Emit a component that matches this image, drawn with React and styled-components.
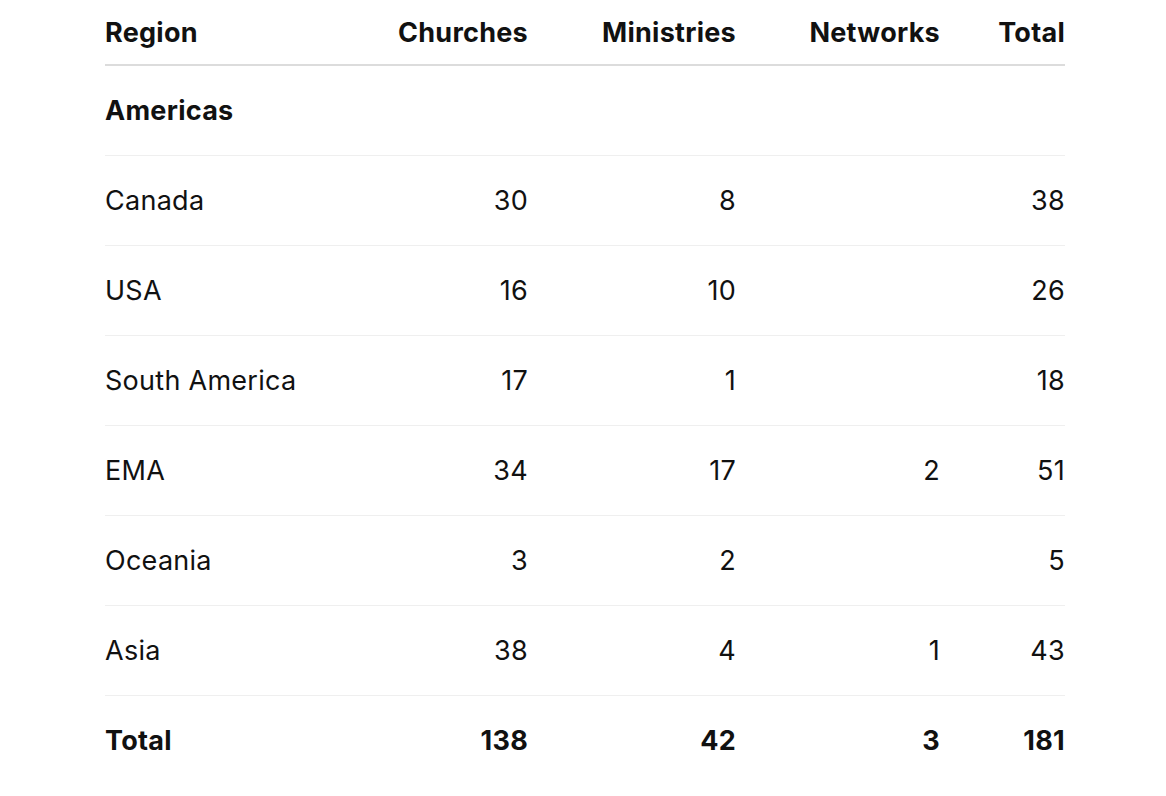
import React from "react";
import styled, { createGlobalStyle } from "styled-components";

const GlobalStyle = createGlobalStyle`
    html, body {
        margin: 0;
        padding: 0;
        background: #fff;
    }
    body {
        font-family: Inter, "Noto Sans", "Liberation Sans", sans-serif;
        color: #111;
    }
`;

const Page = styled.div`
    padding: 0 101px 0 105px;
`;

const Table = styled.table`
    width: 960px;
    border-collapse: collapse;
    table-layout: fixed;
    font-size: 27px;
    letter-spacing: 0.01em;
    white-space: nowrap;
`;

const HeadCell = styled.th`
    height: 64px;
    padding: 0;
    font-weight: 700;
    text-align: ${({ $align }) => $align || "right"};
    border-bottom: 2px solid #dcdcdc;
    vertical-align: middle;
`;

const Row = styled.tr`
    border-bottom: 1px solid #efefef;

    &:last-child {
        border-bottom: none;
    }
`;

const Cell = styled.td`
    height: 89px;
    padding: 0;
    text-align: ${({ $align }) => $align || "right"};
    font-weight: ${({ $bold }) => ($bold ? 700 : 400)};
    vertical-align: middle;
`;

const columns = [
    { label: "Region", width: 230, align: "left" },
    { label: "Churches", width: 193 },
    { label: "Ministries", width: 208 },
    { label: "Networks", width: 204 },
    { label: "Total", width: 125 },
];

const rows = [
    ["Canada", 30, 8, "", 38],
    ["USA", 16, 10, "", 26],
    ["South America", 17, 1, "", 18],
    ["EMA", 34, 17, 2, 51],
    ["Oceania", 3, 2, "", 5],
    ["Asia", 38, 4, 1, 43],
];

const totals = ["Total", 138, 42, 3, 181];

const App = () => (
    <>
        <GlobalStyle />
        <Page>
            <Table>
                <colgroup>
                    {columns.map((c) => (
                        <col key={c.label} style={{ width: c.width }} />
                    ))}
                </colgroup>
                <thead>
                    <tr>
                        {columns.map((c) => (
                            <HeadCell key={c.label} $align={c.align}>
                                {c.label}
                            </HeadCell>
                        ))}
                    </tr>
                </thead>
                <tbody>
                    <Row>
                        <Cell $align="left" $bold colSpan={5}>
                            Americas
                        </Cell>
                    </Row>
                    {rows.map((r) => (
                        <Row key={r[0]}>
                            {r.map((v, i) => (
                                <Cell key={i} $align={i === 0 ? "left" : "right"}>
                                    {v}
                                </Cell>
                            ))}
                        </Row>
                    ))}
                    <Row>
                        {totals.map((v, i) => (
                            <Cell key={i} $bold $align={i === 0 ? "left" : "right"}>
                                {v}
                            </Cell>
                        ))}
                    </Row>
                </tbody>
            </Table>
        </Page>
    </>
);

export default App;
